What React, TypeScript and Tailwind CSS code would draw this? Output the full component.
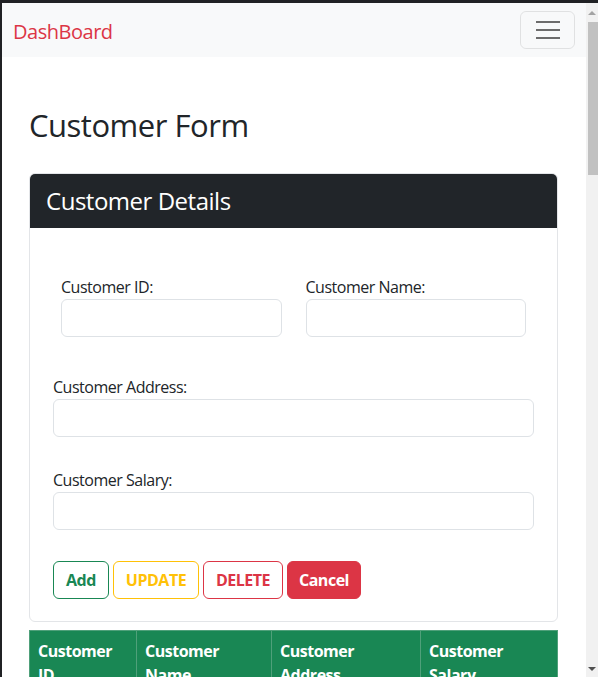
import { useState } from 'react'

const font = { fontFamily: '"Open Sans", "Noto Sans", sans-serif' }

function Field({ label, className = '' }: { label: string; className?: string }) {
  const [value, setValue] = useState('')
  return (
    <div className={className}>
      <label className="block text-[16px] leading-[24px] text-[#212529]">{label}</label>
      <input
        type="text"
        value={value}
        onChange={(e) => setValue(e.target.value)}
        className="block w-full h-[38px] rounded-[6px] border border-[#dee2e6] bg-white px-3 text-[16px] focus:outline-none"
      />
    </div>
  )
}

function Scrollbar() {
  return (
    <div className="w-[12px] bg-[#f1f1f1] flex flex-col items-center">
      <div className="h-[19px] flex items-center justify-center">
        <div className="w-0 h-0 border-l-[4px] border-r-[4px] border-b-[4px] border-l-transparent border-r-transparent border-b-[#a3a3a3]" />
      </div>
      <div className="w-[10px] ml-[2px] h-[153px] bg-[#c1c1c1]" />
      <div className="flex-1" />
      <div className="h-[17px] flex items-center justify-center">
        <div className="w-0 h-0 border-l-[4px] border-r-[4px] border-t-[4px] border-l-transparent border-r-transparent border-t-[#505050]" />
      </div>
    </div>
  )
}

export default function App() {
  const headers = [
    { label: 'Customer ID', w: 'w-[107px]' },
    { label: 'Customer Name', w: 'w-[135px]' },
    { label: 'Customer Address', w: 'w-[149px]' },
    { label: 'Customer Salary', w: 'w-[137px]' },
  ]

  return (
    <div className="h-[677px] overflow-hidden bg-[#202124] pt-[3px] pl-[2px] flex tracking-[-0.03em]" style={font}>
      <div className="flex-1 min-w-0 bg-white flex flex-col">
        {/* Navbar */}
        <nav className="h-[54px] shrink-0 bg-[#f8f9fa] flex items-center justify-between pl-[11px] pr-[11px]">
          <a className="mt-[3px] text-[20px] text-[#dc3545]">DashBoard</a>
          <button className="w-[55px] h-[38px] rounded-[6px] border border-[#00000018] flex flex-col items-center justify-center gap-[6px]">
            <span className="block w-[24px] h-[2px] bg-[#6c6c6c]" />
            <span className="block w-[24px] h-[2px] bg-[#6c6c6c]" />
            <span className="block w-[24px] h-[2px] bg-[#6c6c6c]" />
          </button>
        </nav>

        <main className="pl-[27px] pr-[28px] pt-[50px]">
          <h1 className="text-[31px] leading-[37px] font-medium text-[#212529]">Customer Form</h1>

          {/* Card */}
          <div className="mt-[29px] rounded-[6px] border border-[#e3e5e8] overflow-hidden">
            <div className="h-[54px] bg-[#212529] flex items-center px-[16px]">
              <h3 className="text-[24px] font-medium text-white">Customer Details</h3>
            </div>
            <div className="pt-[47px] pb-[22px] px-[23px]">
              <div className="flex gap-[24px] px-[8px]">
                <Field label="Customer ID:" className="flex-1" />
                <Field label="Customer Name:" className="flex-1" />
              </div>
              <Field label="Customer Address:" className="mt-[38px]" />
              <Field label="Customer Salary:" className="mt-[31px]" />
              <div className="mt-[31px] flex gap-[4px] tracking-normal">
                <button className="w-[56px] h-[38px] rounded-[6px] border border-[#198754] text-[#198754] font-bold text-[16px] tracking-[-0.03em]">Add</button>
                <button className="w-[86px] h-[38px] rounded-[6px] border border-[#ffc107] text-[#ffc107] font-bold text-[16px] tracking-[-0.03em]">UPDATE</button>
                <button className="w-[80px] h-[38px] rounded-[6px] border border-[#dc3545] text-[#dc3545] font-bold text-[16px] tracking-[-0.03em]">DELETE</button>
                <button className="w-[74px] h-[38px] rounded-[6px] border border-[#dc3545] bg-[#dc3545] text-white font-bold text-[16px] tracking-[-0.03em]">Cancel</button>
              </div>
            </div>
          </div>

          {/* Table */}
          <table className="mt-[8px] w-full border-collapse">
            <thead>
              <tr className="bg-[#198754]">
                {headers.map((h) => (
                  <th
                    key={h.label}
                    className={`${h.w} border border-[#4fa07a] px-[8px] py-[8px] text-left align-top text-[16px] leading-[24px] font-bold text-white`}
                  >
                    {h.label}
                  </th>
                ))}
              </tr>
            </thead>
          </table>
        </main>
      </div>
      <Scrollbar />
    </div>
  )
}
